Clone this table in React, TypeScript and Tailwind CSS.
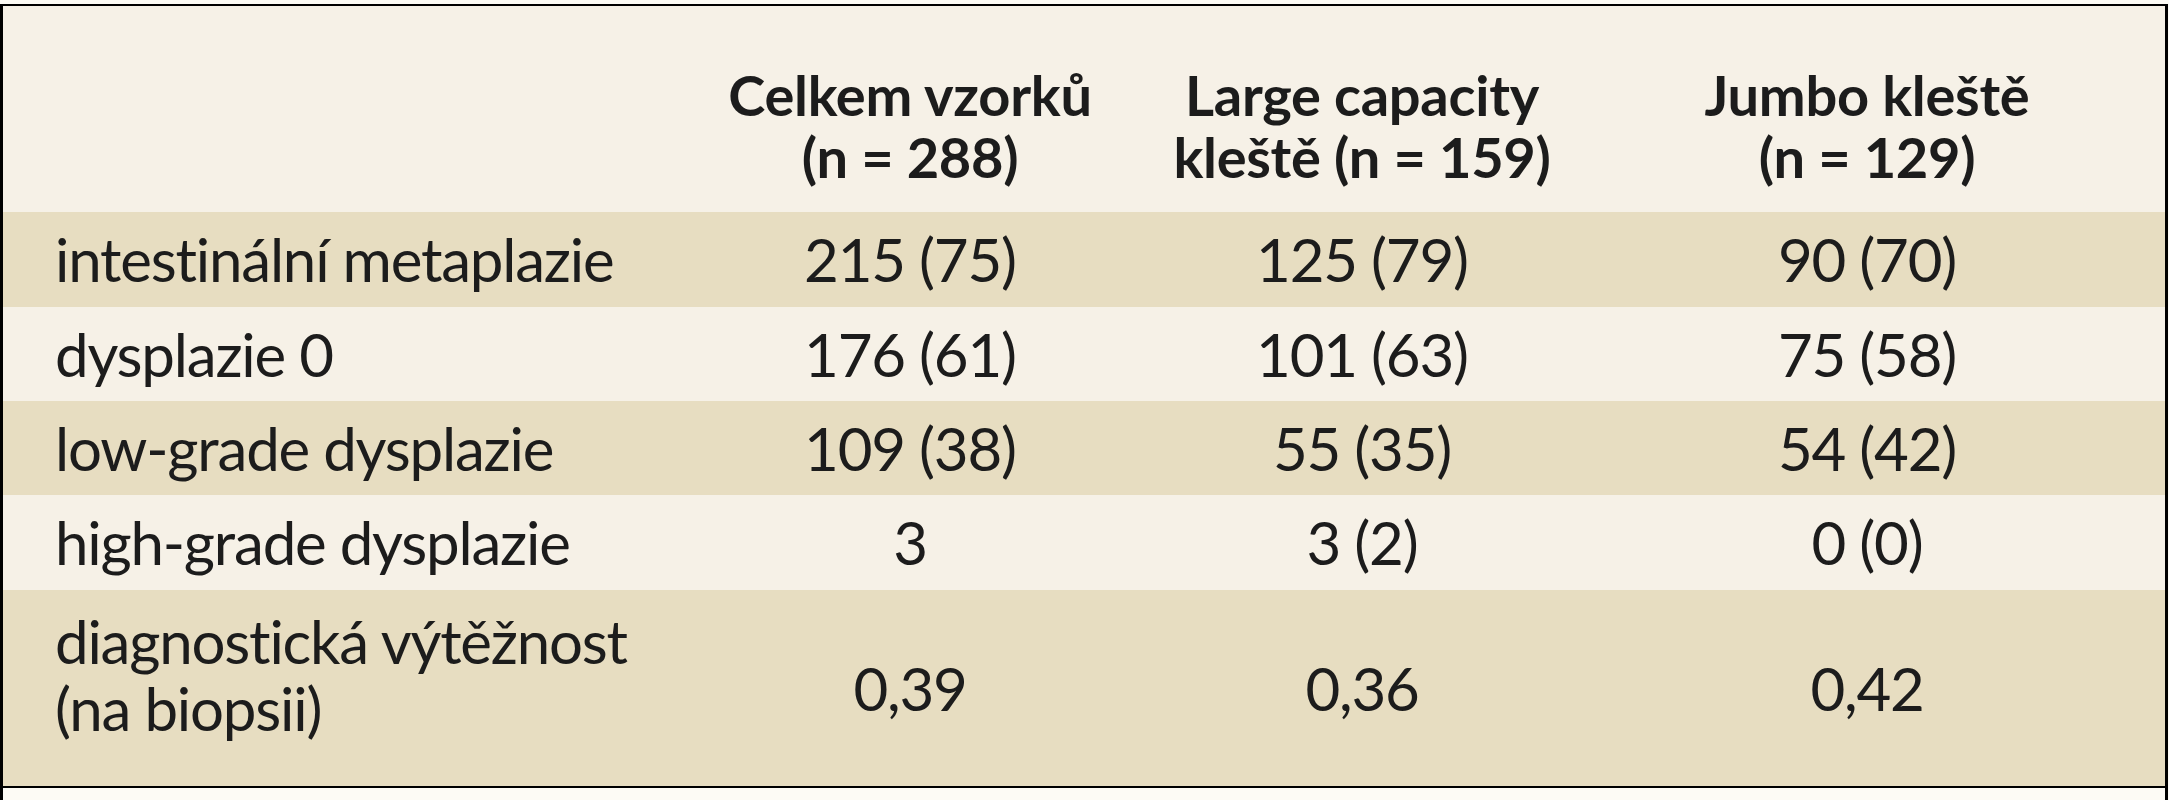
import React from "react";

const rows: { label: string[]; values: string[] }[] = [
  { label: ["intestinální metaplazie"], values: ["215 (75)", "125 (79)", "90 (70)"] },
  { label: ["dysplazie 0"], values: ["176 (61)", "101 (63)", "75 (58)"] },
  { label: ["low-grade dysplazie"], values: ["109 (38)", "55 (35)", "54 (42)"] },
  { label: ["high-grade dysplazie"], values: ["3", "3 (2)", "0 (0)"] },
  { label: ["diagnostická výtěžnost", "(na biopsii)"], values: ["0,39", "0,36", "0,42"] },
];

const heights = ["h-[95px]", "h-[94px]", "h-[94px]", "h-[95px]", "h-[198px]"];

export default function App() {
  return (
    <div
      className="w-[2169px] h-[800px] bg-[#fdfbf5] pt-[4px] text-[#1c1c1c] whitespace-nowrap"
      style={{ fontFamily: 'Lato, "Noto Sans", sans-serif' }}
    >
      <div className="w-[2168px] h-[796px] border-t-2 border-l-[3px] border-r-[3px] border-black bg-[#fdfbf5]">
        <div className="grid grid-cols-[662px_490px_414px_1fr] h-[206px] bg-[#f6f1e7] font-bold text-[56px] leading-[62px] tracking-[-0.005em]">
          <div />
          <div className="flex flex-col items-center justify-end pb-[24px] text-center">
            <span>Celkem vzorků</span>
            <span>(n = 288)</span>
          </div>
          <div className="flex flex-col items-center justify-end pb-[24px] text-center">
            <span>Large capacity</span>
            <span>kleště (n = 159)</span>
          </div>
          <div className="flex flex-col items-center justify-end pb-[24px] text-center">
            <span>Jumbo kleště</span>
            <span>(n = 129)</span>
          </div>
        </div>
        {rows.map((r, i) => (
          <div
            key={i}
            className={`grid grid-cols-[662px_490px_414px_1fr] text-[60px] leading-[67px] tracking-[-0.02em] ${heights[i]} ${
              i % 2 === 0 ? "bg-[#e7ddc1]" : "bg-[#f6f1e7]"
            } ${i === 4 ? "border-b-2 border-black" : ""}`}
          >
            <div className={`flex flex-col pl-[52px] ${i === 4 ? "justify-start pt-[18px]" : "justify-center"}`}>
              {r.label.map((l, j) => (
                <span key={j}>{l}</span>
              ))}
            </div>
            {r.values.map((v, j) => (
              <div key={j} className="flex items-center justify-center">
                {v}
              </div>
            ))}
          </div>
        ))}
      </div>
    </div>
  );
}
